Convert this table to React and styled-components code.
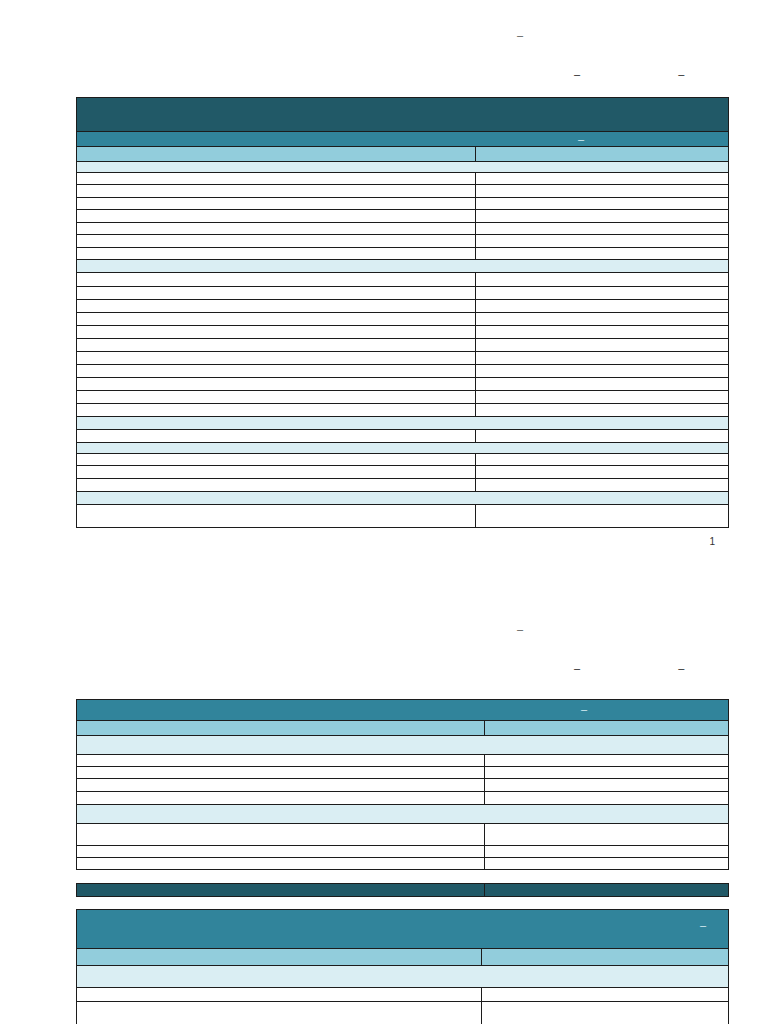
import React from "react";
import styled, { createGlobalStyle } from "styled-components";

const Global = createGlobalStyle`
  html, body { margin: 0; padding: 0; background: #ffffff; }
  body { font-family: "Liberation Sans", Arial, sans-serif; font-size: 11px; color: #222; }
  * { box-sizing: border-box; }
`;

const C = {
  dark: "#215967",
  mid: "#31849b",
  head: "#92cddc",
  sect: "#daeef3",
  line: "#1c1c1c",
};

const Page = styled.section`
  padding: ${(p) => p.$top}px 39px 0 76px;
  width: 768px;
`;

const TitleLine = styled.div`
  display: flex;
  align-items: center;
  height: 20px;
  margin-top: ${(p) => p.$mt || 0}px;
  line-height: 20px;
`;

const Dash = styled.span`
  margin-left: ${(p) => p.$at}px;
  color: ${(p) => p.$color || "#333"};
  font-size: 11px;
`;

const Table = styled.div`
  border: 1px solid ${C.line};
  border-bottom: none;
  margin-top: ${(p) => p.$mt || 0}px;
`;

const Row = styled.div`
  display: grid;
  grid-template-columns: ${(p) => (p.$split ? `${p.$split}px 1fr` : "1fr")};
  height: ${(p) => p.$h}px;
  background: ${(p) => p.$bg || "#ffffff"};
  border-bottom: 1px solid ${C.line};
`;

const Cell = styled.div`
  border-right: ${(p) => (p.$first ? `1px solid ${C.line}` : "none")};
  height: 100%;
`;

const Banner = styled.div`
  height: ${(p) => p.$h}px;
  background: ${(p) => p.$bg};
  border-bottom: 1px solid ${C.line};
  padding: ${(p) => p.$pt}px 0 0 ${(p) => p.$pl}px;
  color: #d8eef4;
  font-size: 11px;
  line-height: 12px;
`;

const PageNum = styled.div`
  margin-top: 8px;
  height: 12px;
  line-height: 12px;
  text-align: right;
  padding-right: 14px;
  font-size: 10px;
  color: #333;
`;

const TwoCol = ({ split, h, bg }) => (
  <Row $split={split} $h={h} $bg={bg}>
    <Cell $first />
    <Cell />
  </Row>
);

const Section = ({ h }) => <Row $h={h} $bg={C.sect} />;

const Header = () => (
  <>
    <TitleLine>
      <Dash $at={441} $color="#555">–</Dash>
    </TitleLine>
    <TitleLine $mt={19}>
      <Dash $at={498} $color="#222">–</Dash>
      <Dash $at={98} $color="#222">–</Dash>
    </TitleLine>
  </>
);

export default function App() {
  const s1 = 399;
  const s2 = 408;
  const s3 = 405;
  return (
    <>
      <Global />
      <Page $top={25}>
        <Header />
        <Table $mt={13}>
          <Banner $h={34} $bg={C.dark} $pt={0} $pl={0} />
          <Banner $h={15} $bg={C.mid} $pt={1} $pl={501}>–</Banner>
          <TwoCol split={s1} h={15} bg={C.head} />
          <Section h={11} />
          {[12, 13, 12, 13, 12, 13, 12].map((h, i) => (
            <TwoCol key={"a" + i} split={s1} h={h} />
          ))}
          <Section h={13} />
          {[14, 13, 13, 13, 13, 13, 13, 13, 13, 13, 13].map((h, i) => (
            <TwoCol key={"b" + i} split={s1} h={h} />
          ))}
          <Section h={13} />
          <TwoCol split={s1} h={13} />
          <Section h={11} />
          {[12, 13, 13].map((h, i) => (
            <TwoCol key={"c" + i} split={s1} h={h} />
          ))}
          <Section h={13} />
          <TwoCol split={s1} h={23} />
        </Table>
        <PageNum>1</PageNum>
      </Page>
      <Page $top={71}>
        <Header />
        <Table $mt={21}>
          <Banner $h={21} $bg={C.mid} $pt={3} $pl={504}>–</Banner>
          <TwoCol split={s2} h={15} bg={C.head} />
          <Section h={19} />
          {[12, 12, 13, 13].map((h, i) => (
            <TwoCol key={"d" + i} split={s2} h={h} />
          ))}
          <Section h={19} />
          <TwoCol split={s2} h={22} />
          <TwoCol split={s2} h={12} />
          <TwoCol split={s2} h={12} />
        </Table>
        <Table $mt={13}>
          <TwoCol split={s2} h={13} bg={C.dark} />
        </Table>
        <Table $mt={12}>
          <Banner $h={39} $bg={C.mid} $pt={9} $pl={623}>–</Banner>
          <TwoCol split={s3} h={17} bg={C.head} />
          <Section h={22} />
          <TwoCol split={s3} h={14} />
          <TwoCol split={s3} h={40} />
        </Table>
      </Page>
    </>
  );
}
